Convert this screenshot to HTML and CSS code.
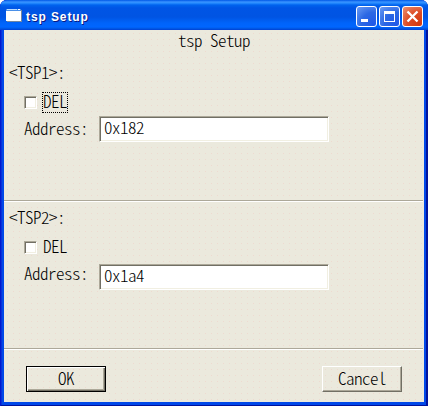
FILE: index.html
```html
<!DOCTYPE html>
<html lang="en">
<head>
<meta charset="utf-8">
<title>tsp Setup</title>
<link rel="stylesheet" href="styles.css">
</head>
<body>
<div class="window">
  <header class="titlebar">
    <svg class="app-icon" width="16" height="13" viewBox="0 0 16 13" shape-rendering="crispEdges"><path fill="#4b90e8" d="M0 0h15v2H0z"/><path fill="#b9dcff" d="M1 0h10v1H1z"/><path fill="#fff" d="M12 0h2v1h-2zM0 2h15v10H0z"/><path fill="#73869f" d="M15 1h1v12H1v-1h14z"/></svg>
    <span class="caption">tsp Setup</span>
    <div class="controls">
      <button class="control" aria-label="Minimize"><svg width="19" height="19" viewBox="0 0 19 19"><path fill="#fff" d="M4 12h7v3H4z"/></svg></button>
      <button class="control" aria-label="Maximize"><svg width="19" height="19" viewBox="0 0 19 19"><path fill="#fff" fill-rule="evenodd" d="M4 4h11v11H4zM5 7v7h9V7z"/></svg></button>
      <button class="control close" aria-label="Close"><svg width="19" height="19" viewBox="0 0 19 19"><path fill="none" stroke="#fff" stroke-width="2.3" d="M4.5 4.5l10 10M14.5 4.5l-10 10"/></svg></button>
    </div>
  </header>
  <main class="client">
    <h1 class="heading">tsp Setup</h1>
    <section class="group first">
      <div class="name">&lt;TSP1&gt;:</div>
      <div class="check-row"><span class="checkbox"></span><span class="check-label focused">DEL</span></div>
      <div class="field-row"><span class="label">Address:</span><div class="field">0x182</div></div>
    </section>
    <section class="group second">
      <div class="name">&lt;TSP2&gt;:</div>
      <div class="check-row"><span class="checkbox"></span><span class="check-label">DEL</span></div>
      <div class="field-row"><span class="label">Address:</span><div class="field">0x1a4</div></div>
    </section>
    <footer class="actions">
      <button class="button default">OK</button>
      <button class="button">Cancel</button>
    </footer>
  </main>
</div>
</body>
</html>
```
FILE: styles.css
```css
* { box-sizing: border-box; }
body { margin: 0; background: #fff; }
.window {
  display: flex;
  flex-direction: column;
  width: 428px;
  height: 406px;
  padding: 0 4px 4px;
  overflow: hidden;
  border-radius: 7px 7px 0 0;
  background: #0048e8;
  box-shadow: inset 1px 0 #0019cf, inset -2px -1px #00139c, inset 2px 0 #0831d9;
  font: 300 17px/20px "Noto Sans CJK JP", "Liberation Mono", monospace;
  font-feature-settings: "hwid";
  letter-spacing: -.5px;
  color: #000;
}
.titlebar {
  display: flex;
  align-items: center;
  height: 30px;
  margin: 0 -4px;
  padding: 3px 5px 0 6px;
  background: linear-gradient(#0058e6 0, #3a93ff 2px, #288eff 3px, #0063ee 5px, #0055e5 8px, #0054e3 17px, #0064fa 23px, #0066ff 27px, #0052dc 29px, #003dd7 30px);
}
.app-icon { display: block; margin-top: -2px; }
.caption {
  flex: 1;
  padding-left: 4px;
  font: 700 12px/20px "Liberation Sans", sans-serif;
  letter-spacing: .9px;
  color: #fff;
  text-shadow: 1px 1px #0a1883;
}
.controls { display: flex; gap: 2px; margin-top: -1px; }
.control {
  width: 21px;
  height: 21px;
  padding: 0;
  border: 1px solid #fff;
  border-radius: 3px;
  background: radial-gradient(circle at 85% 90%, #2159e8 0, #2c68e4 50%, #6b9cf4 100%);
}
.control svg { display: block; }
.close { background: radial-gradient(circle at 85% 90%, #d43a10 0, #dc4c26 50%, #ee9272 100%); }
.client {
  flex: 1;
  display: flex;
  flex-direction: column;
  background: #ebe9dd radial-gradient(circle at 3.5px 3.5px, #eedad0 0, #eedad0 .5px, transparent .6px) 0 0 / 6px 6px;
}
.heading { margin: 0; height: 29px; padding: 0; font: inherit; text-align: center; line-height: 20px; }
.group { margin-right: 1px; border-bottom: 1px solid #fff; box-shadow: inset 0 -1px #aca899; padding-left: 5px; }
.first { height: 143px; padding-top: 4px; }
.second { height: 148px; padding-top: 6px; }
.name { height: 20px; line-height: 18px; }
.check-row { display: flex; align-items: center; height: 20px; margin-top: 9px; padding-left: 15px; }
.checkbox {
  width: 13px;
  height: 13px;
  border: 1px solid;
  border-color: #aca899 #fff #fff #aca899;
  background: #fff;
  box-shadow: inset 1px 1px #716f64, inset -1px -1px #f1efe2;
}
.check-label { width: 26px; height: 21px; margin: 0 0 0 5px; padding: 0 1px; line-height: 18px; }
.focused { outline: 1px dotted #000; outline-offset: -1px; }
.field-row { display: flex; height: 26px; margin-top: 4px; padding-left: 15px; }
.second .field-row { margin-top: 7px; }
.label { width: 75px; line-height: 24px; }
.second .label { line-height: 18px; }
.field {
  width: 230px;
  height: 26px;
  padding-left: 4px;
  border: 1px solid;
  border-color: #aca899 #fff #fff #aca899;
  background: #fff;
  box-shadow: inset 1px 1px #716f64, inset -1px -1px #f1efe2;
  line-height: 20px;
}
.actions { display: flex; justify-content: space-between; padding: 16px 22px 0; }
.button {
  width: 80px;
  height: 26px;
  padding: 0 0 3px;
  border: 1px solid;
  border-color: #fff #716f64 #716f64 #fff;
  background: transparent;
  box-shadow: inset -1px -1px #aca899;
  font: inherit;
  font-feature-settings: inherit;
  letter-spacing: inherit;
  line-height: 21px;
  color: #000;
}
.default { border-color: #000; box-shadow: inset 1px 1px #fff, inset -1px -1px #716f64, inset -2px -2px #aca899; }
```
